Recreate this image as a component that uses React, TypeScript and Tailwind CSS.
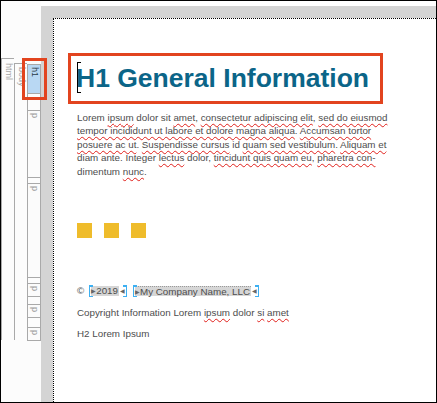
import React from "react";

const sq = "underline decoration-wavy decoration-[#e0201b] decoration-1 underline-offset-[2px]";

function Tab({ label, h, active }: { label: string; h: number; active?: boolean }) {
  return (
    <div
      className={`border-y border-[#a9a9a9] flex justify-center pt-[2px] ${active ? "bg-[#b9d8f3]" : "bg-[#fbfbfb]"}`}
      style={{ height: h }}
    >
      <span
        className={`[writing-mode:vertical-rl] text-[9px] leading-[9px] ${active ? "text-[#2a3a48]" : "text-[#9a9a9a]"}`}
      >
        {label}
      </span>
    </div>
  );
}

function Field({ children, dotted }: { children: React.ReactNode; dotted?: boolean }) {
  return (
    <span className="inline-flex items-center h-[12px] border-l-[1.5px] border-r-[1.5px] border-[#3db0f2] px-[1px] relative">
      <span className="absolute left-0 top-0 w-[3px] h-[1.5px] bg-[#3db0f2]" />
      <span className="absolute left-0 bottom-0 w-[3px] h-[1.5px] bg-[#3db0f2]" />
      <span className="absolute right-0 top-0 w-[3px] h-[1.5px] bg-[#3db0f2]" />
      <span className="absolute right-0 bottom-0 w-[3px] h-[1.5px] bg-[#3db0f2]" />
      <span
        className={`flex items-center h-[10px] bg-[#d6d6d6] pr-[1px] ${dotted ? "border-t border-dotted border-[#9a9a9a]" : ""}`}
      >
        <span className="text-[6px] text-[#666] leading-none">▶</span>
        <span className="leading-none">{children}</span>
      </span>
      <span className="text-[6px] text-[#666] leading-none ml-[1px]">◀</span>
    </span>
  );
}

export default function App() {
  return (
    <div
      className="relative w-[437px] h-[403px] border border-black flex bg-white overflow-hidden"
      style={{ fontFamily: '"Liberation Sans", Arial, sans-serif' }}
    >
      {/* structure bar */}
      <div className="w-[40px] shrink-0 bg-[#fcfcfc] flex items-start">
        <div className="mt-[57px] w-[13px] h-[282px] border-l border-t border-[#a9a9a9] flex justify-center pt-[4px]">
          <span className="[writing-mode:vertical-rl] text-[9px] leading-[9px] text-[#a5a5a5]">html</span>
        </div>
        <div className="mt-[62px] w-[13px] h-[277px] border-l border-t border-[#a9a9a9] flex justify-center pt-[3px]">
          <span className="[writing-mode:vertical-rl] text-[9px] leading-[9px] text-[#a5a5a5]">body</span>
        </div>
        <div className="mt-[63px] w-[14px] border-l border-r border-[#a9a9a9] flex flex-col">
          <Tab label="h1" h={30} active />
          <div className="h-[16px]" />
          <Tab label="p" h={68} />
          <div className="h-[5px]" />
          <Tab label="p" h={95} />
          <div className="h-[5px]" />
          <Tab label="p" h={14} />
          <div className="h-[7px]" />
          <Tab label="p" h={14} />
          <div className="h-[9px]" />
          <Tab label="p" h={14} />
        </div>
      </div>

      {/* selection highlight on h1 tab */}
      <div className="absolute left-[21px] top-[57px] w-[25px] h-[42px] border-[3px] border-[#e2441f]" />

      {/* editor */}
      <div className="flex-1 flex flex-col">
        <div className="h-[5px] shrink-0" />
        <div className="flex-1 bg-[#d4d4d4] pt-[12px] pl-[12px] flex">
          <div className="flex-1 bg-white border-t border-l border-dotted border-black pl-[23px] text-[9.8px] text-[#4d4d4d]">
            <div className="-ml-[9px] mt-[34px] w-[315px] h-[51px] border-[3px] border-[#e2441f] pl-[5px] relative">
              <div className="absolute left-[6px] top-[6px] w-[4px] h-[31px] border-l border-y border-black" />
              <h1 className="text-[26.5px] leading-[45px] font-bold text-[#0b6588] whitespace-nowrap">
                H1 General Information
              </h1>
            </div>

            <p className="mt-[7px] leading-[13.4px] whitespace-nowrap">
              Lorem <span className={sq}>ipsum</span> dolor sit <span className={sq}>amet</span>,{" "}
              <span className={sq}>consectetur adipiscing elit</span>, <span className={sq}>sed do eiusmod</span>
              <br />
              <span className={sq}>tempor incididunt ut labore et dolore magna aliqua</span>.{" "}
              <span className={sq}>Accumsan tortor</span>
              <br />
              <span className={sq}>posuere ac ut</span>. <span className={sq}>Suspendisse cursus</span> id{" "}
              <span className={sq}>quam sed vestibulum</span>. <span className={sq}>Aliquam et</span>
              <br />
              diam ante. Integer <span className={sq}>lectus</span> dolor,{" "}
              <span className={sq}>tincidunt quis quam eu</span>, <span className={sq}>pharetra con-</span>
              <br />
              dimentum <span className={sq}>nunc</span>.
            </p>

            <div className="mt-[45px] flex gap-[12px]">
              <div className="w-[15px] h-[15px] bg-[#efbc2b]" />
              <div className="w-[15px] h-[15px] bg-[#efbc2b]" />
              <div className="w-[15px] h-[15px] bg-[#efbc2b]" />
            </div>

            <div className="mt-[47px] h-[12px] flex items-center whitespace-nowrap">
              <span className="mr-[5px]">©</span>
              <Field>2019</Field>
              <span className="w-[6px]" />
              <Field dotted>My Company Name, LLC</Field>
            </div>

            <p className="mt-[9px] leading-[13.4px] whitespace-nowrap">
              Copyright Information Lorem <span className={sq}>ipsum</span> dolor <span className={sq}>si</span>{" "}
              <span className={sq}>amet</span>
            </p>

            <p className="mt-[8px] leading-[13.4px] whitespace-nowrap">H2 Lorem Ipsum</p>
          </div>
        </div>
      </div>
    </div>
  );
}
